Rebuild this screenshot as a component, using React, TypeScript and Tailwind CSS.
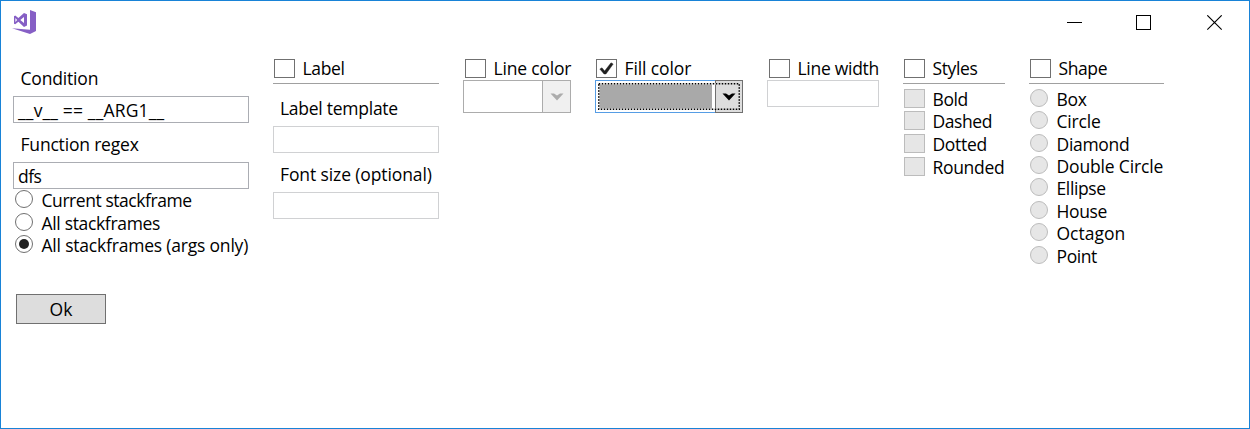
import type { ReactNode } from "react";

function Caption({ children, className = "" }: { children: ReactNode; className?: string }) {
  return <span className={`whitespace-nowrap ${className}`}>{children}</span>;
}

function CheckBox({ checked = false, disabled = false }: { checked?: boolean; disabled?: boolean }) {
  return (
    <span
      className={`ml-px h-[19px] w-[21px] shrink-0 border ${
        disabled ? "border-[#bcbcbc] bg-[#e6e6e6]" : "border-[#707070] bg-white"
      }`}
    >
      {checked && (
        <svg className="block h-[17px] w-[19px]" viewBox="0 0 19 17">
          <path d="M2.8 9 L5 7.8 L7.6 11 L14 2.8 L16.2 4 L9 14 L7 14 Z" fill="#212121" stroke="#212121" strokeWidth="0.4" />
        </svg>
      )}
    </span>
  );
}

function Radio({ checked = false, disabled = false }: { checked?: boolean; disabled?: boolean }) {
  return (
    <span
      className={`flex h-[18px] w-[18px] shrink-0 items-center justify-center rounded-full border ${
        disabled ? "border-[#bcbcbc] bg-[#e6e6e6]" : "border-[#707070] bg-white"
      }`}
    >
      {checked && <span className="h-[10px] w-[10px] rounded-full bg-[#212121]" />}
    </span>
  );
}

function Header({ text, track, checked, rule }: { text: string; track: string; checked?: boolean; rule?: boolean }) {
  return (
    <div className={`flex h-[25px] items-start ${rule ? "border-b border-[#a0a0a0]" : ""}`}>
      <CheckBox checked={checked} />
      <Caption className={`ml-[7.5px] leading-[19px] ${track}`}>{text}</Caption>
    </div>
  );
}

function TextBox({ value = "", dim = false, track = "" }: { value?: string; dim?: boolean; track?: string }) {
  return (
    <div className={`h-[27px] shrink-0 border bg-white pl-1 leading-[27px] ${dim ? "border-[#d0d1d3]" : "border-[#abadb3]"}`}>
      <Caption className={track}>{value}</Caption>
    </div>
  );
}

function Arrow({ color }: { color: string }) {
  return (
    <svg className="h-[8px] w-[14px]" viewBox="0 0 14 8">
      <path d="M0.5 0.5 H4 L7 2.5 L10 0.5 H13.5 L7 7.5 Z" fill={color} />
    </svg>
  );
}

const scopes = [
  { text: "Current stackframe", track: "tracking-[-0.44px]", on: false },
  { text: "All stackframes", track: "tracking-[-0.33px]", on: false },
  { text: "All stackframes (args only)", track: "tracking-[-0.2px]", on: true },
];

const styles = [
  { text: "Bold", track: "tracking-[-0.4px]" },
  { text: "Dashed", track: "tracking-[-0.43px]" },
  { text: "Dotted", track: "tracking-[-0.33px]" },
  { text: "Rounded", track: "tracking-[-0.32px]" },
];

const shapes = [
  { text: "Box", track: "tracking-[-0.25px]" },
  { text: "Circle", track: "tracking-[-0.2px]" },
  { text: "Diamond", track: "tracking-[-0.32px]" },
  { text: "Double Circle", track: "tracking-[-0.16px]" },
  { text: "Ellipse", track: "tracking-[-0.37px]" },
  { text: "House", track: "tracking-[-0.4px]" },
  { text: "Octagon", track: "tracking-[0px]" },
  { text: "Point", track: "tracking-[-0.4px]" },
];

export default function App() {
  return (
    <div className="flex h-[429px] w-[1250px] flex-col overflow-hidden border border-[#1883d7] bg-white font-['Open_Sans',sans-serif] text-[17.5px] font-normal text-black">
      <div className="flex h-[46px] shrink-0 items-start justify-between pl-[11px] pr-[26px]">
        <svg className="mt-[8px] h-[26px] w-[25px]" viewBox="0 0 25 26">
          <path
            fillRule="evenodd"
            fill="#865fc5"
            d="M18 1 L24 3.2 V22 L18 25 L0 19.2 L18 20.8 Z M12 4 L15 5.2 V16.6 L12 18 L6.4 12.8 L3.2 15.3 L2 14.7 V7.2 L3.2 6.6 L6.4 9.1 Z M12 8 L8.3 11 L12 14 Z M3.4 9 V12.9 L5.1 11 Z"
          />
        </svg>
        <div className="flex pt-[14px]">
          <svg className="h-[16px] w-[156px]" viewBox="0 0 156 16" fill="none" stroke="#000" shapeRendering="crispEdges">
            <path d="M0 7.5 H15" />
            <path d="M69.5 0.5 H83.5 V14.5 H69.5 Z" />
            <path d="M140.3 0.3 L154.7 14.7 M154.7 0.3 L140.3 14.7" shapeRendering="auto" strokeWidth="1.1" />
          </svg>
        </div>
      </div>

      <div className="flex items-start gap-6 pl-3 pt-3">
        <div className="flex w-[236px] flex-col">
          <Caption className="h-[37px] pl-[7.5px] pt-[6.5px] leading-[24px] tracking-[-0.18px]">Condition</Caption>
          <TextBox value="__v__ == __ARG1__" track="tracking-[0.15px]" />
          <Caption className="h-[39px] pl-[7.5px] pt-[8.5px] leading-[24px] tracking-[-0.19px]">Function regex</Caption>
          <TextBox value="dfs" track="tracking-[-0.5px]" />
          <div className="flex flex-col pt-[1.2px]">
            {scopes.map((s) => (
              <div key={s.text} className="flex h-[22.4px] items-start pl-[2px]">
                <Radio checked={s.on} />
                <Caption className={`ml-[8.5px] leading-[20.2px] ${s.track}`}>{s.text}</Caption>
              </div>
            ))}
          </div>
          <button className="ml-[3px] mt-[36.6px] h-[30px] w-[90px] border border-[#707070] bg-[#dddddd] leading-[28px]">Ok</button>
        </div>

        <div className="flex w-[166px] flex-col">
          <Header text="Label" track="tracking-[-0.35px]" rule />
          <Caption className="h-[42px] pl-[7px] pt-[11.5px] leading-[24px] tracking-[-0.26px]">Label template</Caption>
          <TextBox dim />
          <Caption className="h-[39px] pl-[7px] pt-[8.5px] leading-[24px] tracking-[-0.11px]">Font size (optional)</Caption>
          <TextBox dim />
        </div>

        <div className="flex w-[108px] flex-col">
          <div className="h-[21px] pl-px">
            <Header text="Line color" track="tracking-[-0.2px]" />
          </div>
          <div className="flex h-[33px] border border-[#acacac] bg-white">
            <div className="flex-1" />
            <div className="flex w-[28px] items-center justify-center border-l border-[#acacac] bg-[#f0f0f0]">
              <Arrow color="#acacac" />
            </div>
          </div>
        </div>

        <div className="flex w-[148px] flex-col">
          <div className="h-[21px]">
            <Header text="Fill color" track="tracking-[-0.1px]" checked />
          </div>
          <div className="relative flex h-[33px]">
            <div className="flex-1 border border-r-0 border-[#569de5] bg-white py-[3px] pl-[3px] pr-[3px]">
              <div className="h-full bg-[#a9a9a9]" />
            </div>
            <div className="flex w-[28px] items-center justify-center border border-[#707070] bg-[#dddddd]">
              <Arrow color="#000000" />
            </div>
            <svg className="absolute left-[3px] top-[3px] h-[27px] w-[142px]" viewBox="0 0 142 27" fill="none">
              <path d="M118 0.75 H0.75 V26.25 H118" stroke="#fff" strokeWidth="1.5" />
              <rect x="0.75" y="0.75" width="140.5" height="25.5" stroke="#000" strokeWidth="1.5" strokeDasharray="1.5 1.5" />
            </svg>
          </div>
        </div>

        <div className="flex w-[112px] flex-col">
          <div className="h-[21px] pl-px">
            <Header text="Line width" track="tracking-[-0.28px]" />
          </div>
          <TextBox dim />
        </div>

        <div className="flex w-[102px] flex-col">
          <Header text="Styles" track="tracking-[-0.36px]" rule />
          <div className="flex flex-col pt-[4.8px]">
            {styles.map((s) => (
              <div key={s.text} className="flex h-[22.6px] items-start">
                <CheckBox disabled />
                <Caption className={`ml-[7.5px] leading-[20.2px] ${s.track}`}>{s.text}</Caption>
              </div>
            ))}
          </div>
        </div>

        <div className="flex w-[135px] flex-col">
          <Header text="Shape" track="tracking-[-0.4px]" rule />
          <div className="flex flex-col pt-[4.8px]">
            {shapes.map((s) => (
              <div key={s.text} className="flex h-[22.4px] items-start pl-px">
                <Radio disabled />
                <Caption className={`ml-[8.5px] leading-[20.2px] ${s.track}`}>{s.text}</Caption>
              </div>
            ))}
          </div>
        </div>
      </div>
    </div>
  );
}
